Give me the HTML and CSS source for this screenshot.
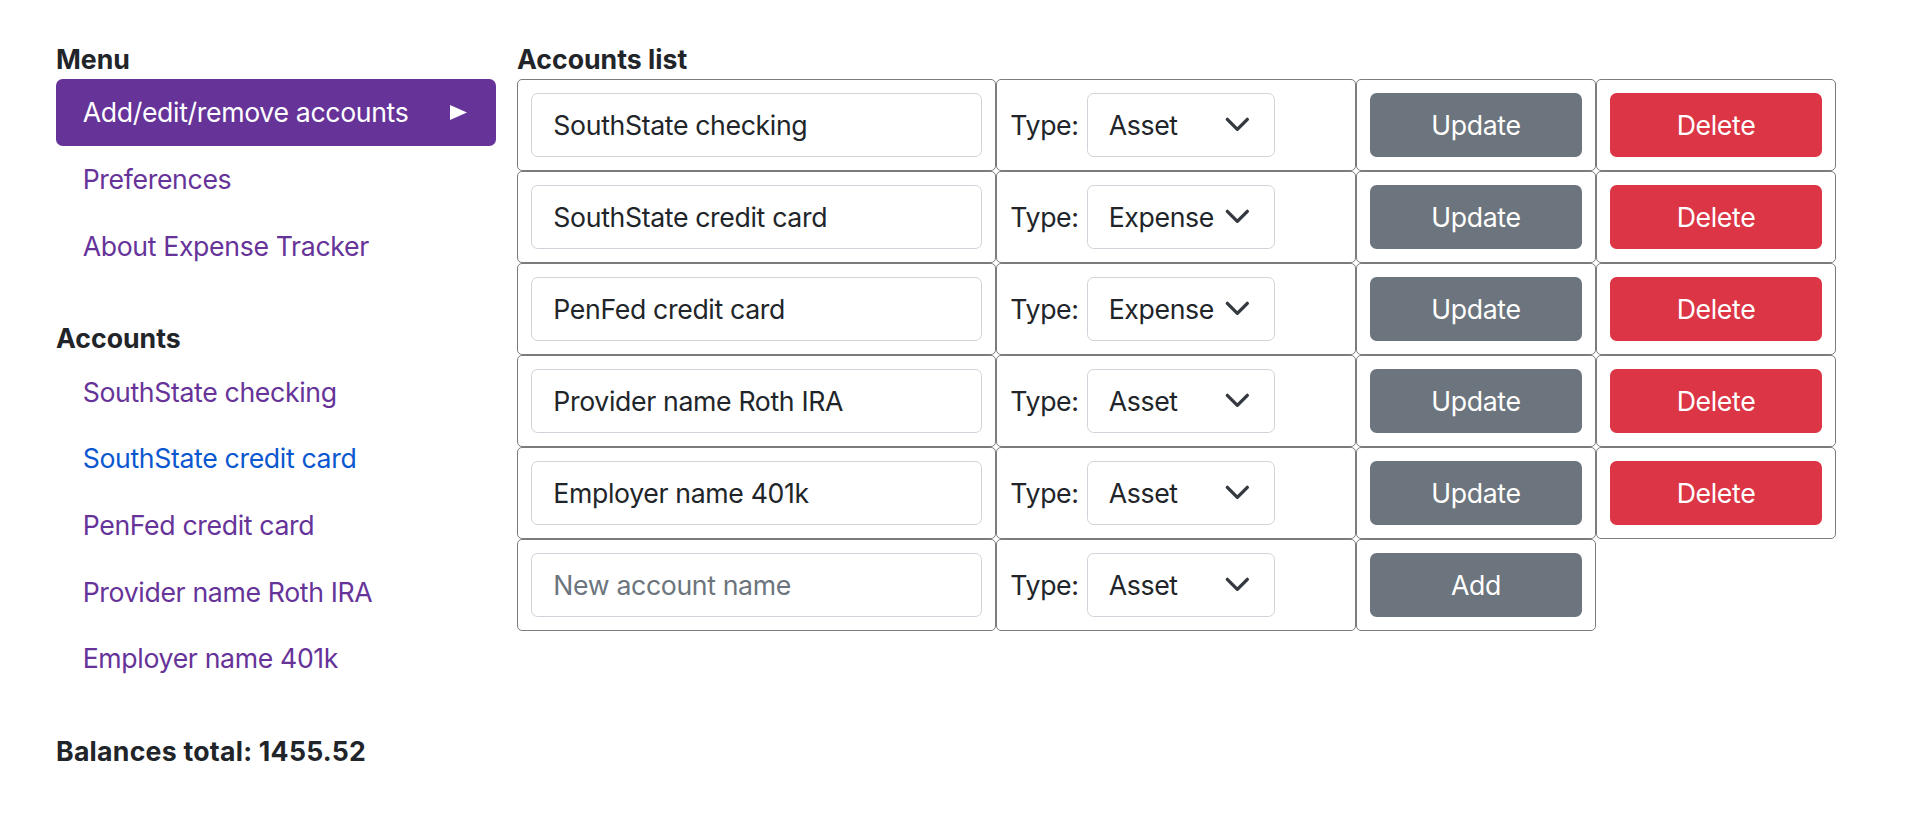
FILE: index.html
```html
<!DOCTYPE html>
<html lang="en">
<head>
<meta charset="utf-8">
<title>Expense Tracker - Accounts</title>
<link rel="stylesheet" href="styles.css">
</head>
<body>
<div class="page">
  <aside class="sidebar">
    <h6 class="heading">Menu</h6>
    <nav class="nav">
      <a class="nav-link active" href="#">Add/edit/remove accounts
        <svg class="arrow" width="17" height="15" viewBox="0 0 17 15" aria-hidden="true"><path d="M0 0 L17 7.5 L0 15 Z" fill="#fff"/></svg>
      </a>
      <a class="nav-link" href="#">Preferences</a>
      <a class="nav-link" href="#">About Expense Tracker</a>
    </nav>
    <h6 class="heading section">Accounts</h6>
    <nav class="nav">
      <a class="nav-link" href="#">SouthState checking</a>
      <a class="nav-link blue" href="#">SouthState credit card</a>
      <a class="nav-link" href="#">PenFed credit card</a>
      <a class="nav-link" href="#">Provider name Roth IRA</a>
      <a class="nav-link" href="#">Employer name 401k</a>
    </nav>
    <h6 class="heading section total">Balances total: 1455.52</h6>
  </aside>
  <main class="main">
    <h6 class="heading">Accounts list</h6>
    <table class="accounts">
      <colgroup>
        <col class="c-name"><col class="c-type"><col class="c-btn"><col class="c-btn">
      </colgroup>
      <tbody>
        <tr>
          <td><input class="field" type="text" value="SouthState checking"></td>
          <td><div class="type"><label>Type:</label><div class="select-wrap"><select class="select"><option selected>Asset</option><option>Expense</option></select><svg class="chev" viewBox="0 0 16 16"><path d="M2 5l6 6 6-6"/></svg></div></div></td>
          <td><button class="btn gray">Update</button></td>
          <td><button class="btn red">Delete</button></td>
        </tr>
        <tr>
          <td><input class="field" type="text" value="SouthState credit card"></td>
          <td><div class="type"><label>Type:</label><div class="select-wrap"><select class="select"><option>Asset</option><option selected>Expense</option></select><svg class="chev" viewBox="0 0 16 16"><path d="M2 5l6 6 6-6"/></svg></div></div></td>
          <td><button class="btn gray">Update</button></td>
          <td><button class="btn red">Delete</button></td>
        </tr>
        <tr>
          <td><input class="field" type="text" value="PenFed credit card"></td>
          <td><div class="type"><label>Type:</label><div class="select-wrap"><select class="select"><option>Asset</option><option selected>Expense</option></select><svg class="chev" viewBox="0 0 16 16"><path d="M2 5l6 6 6-6"/></svg></div></div></td>
          <td><button class="btn gray">Update</button></td>
          <td><button class="btn red">Delete</button></td>
        </tr>
        <tr>
          <td><input class="field" type="text" value="Provider name Roth IRA"></td>
          <td><div class="type"><label>Type:</label><div class="select-wrap"><select class="select"><option selected>Asset</option><option>Expense</option></select><svg class="chev" viewBox="0 0 16 16"><path d="M2 5l6 6 6-6"/></svg></div></div></td>
          <td><button class="btn gray">Update</button></td>
          <td><button class="btn red">Delete</button></td>
        </tr>
        <tr>
          <td><input class="field" type="text" value="Employer name 401k"></td>
          <td><div class="type"><label>Type:</label><div class="select-wrap"><select class="select"><option selected>Asset</option><option>Expense</option></select><svg class="chev" viewBox="0 0 16 16"><path d="M2 5l6 6 6-6"/></svg></div></div></td>
          <td><button class="btn gray">Update</button></td>
          <td><button class="btn red">Delete</button></td>
        </tr>
        <tr>
          <td><input class="field" type="text" placeholder="New account name"></td>
          <td><div class="type"><label>Type:</label><div class="select-wrap"><select class="select"><option selected>Asset</option><option>Expense</option></select><svg class="chev" viewBox="0 0 16 16"><path d="M2 5l6 6 6-6"/></svg></div></div></td>
          <td><button class="btn gray">Add</button></td>
        </tr>
      </tbody>
    </table>
  </main>
</div>
</body>
</html>
```
FILE: styles.css
```css
* { box-sizing: border-box; }

body {
  margin: 0;
  font-family: Inter, "Noto Sans", sans-serif;
  font-size: 26.67px;
  line-height: 40px;
  letter-spacing: -0.35px;
  color: #212529;
  background: #fff;
}

.page {
  display: flex;
  align-items: flex-start;
  gap: 21px;
  padding: 43px 0 0 56px;
}

.sidebar {
  width: 440px;
  flex: none;
}

.heading {
  margin: 0 0 4px;
  font-size: 26.67px;
  font-weight: 700;
  line-height: 32px;
  letter-spacing: 0;
}

.heading.section {
  margin-top: 43.5px;
}

.heading.total { letter-spacing: 0.25px; }

.nav {
  display: flex;
  flex-direction: column;
}

.nav-link {
  display: flex;
  align-items: center;
  justify-content: space-between;
  padding: 13.33px 26.67px;
  color: #663399;
  text-decoration: none;
  border-radius: 6.67px;
}

.nav-link.blue { color: #0b57d0; }

.nav-link.active {
  background: #663399;
  color: #fff;
}

.arrow { margin-right: 2px; }

.main { flex: none; }

.accounts {
  border-collapse: separate;
  border-spacing: 0;
  table-layout: fixed;
  width: 1319px;
  margin-top: 1px;
}

.c-name { width: 479px; }
.c-type { width: 360px; }
.c-btn { width: 240px; }

.accounts td {
  border: 1px solid #7c7c7c;
  border-radius: 5px;
  padding: 13.33px;
  vertical-align: middle;
}

.field {
  display: block;
  width: 100%;
  height: 63.33px;
  padding: 0 21px;
  font: inherit;
  letter-spacing: inherit;
  color: #212529;
  border: 1px solid #ced4da;
  border-radius: 6.67px;
  background: #fff;
}

.field::placeholder { color: #6c757d; opacity: 1; }

.type {
  display: flex;
  align-items: center;
  gap: 8px;
}

.select-wrap {
  position: relative;
  width: 188px;
}

.select {
  display: block;
  width: 100%;
  height: 63.33px;
  padding: 0 40px 0 21px;
  font: inherit;
  letter-spacing: inherit;
  color: #212529;
  border: 1px solid #ced4da;
  border-radius: 6.67px;
  background: #fff;
  appearance: none;
  -webkit-appearance: none;
}

.chev {
  position: absolute;
  right: 24px;
  top: 50%;
  width: 26.67px;
  height: 26.67px;
  margin-top: -14px;
  fill: none;
  stroke: #343a40;
  stroke-width: 2;
  stroke-linecap: round;
  stroke-linejoin: round;
  pointer-events: none;
}

.btn {
  display: block;
  width: 100%;
  height: 63.33px;
  border: none;
  border-radius: 6.67px;
  font: inherit;
  letter-spacing: inherit;
  color: #fff;
}

.btn.gray { background: #6c757d; }
.btn.red { background: #dc3545; }
```
